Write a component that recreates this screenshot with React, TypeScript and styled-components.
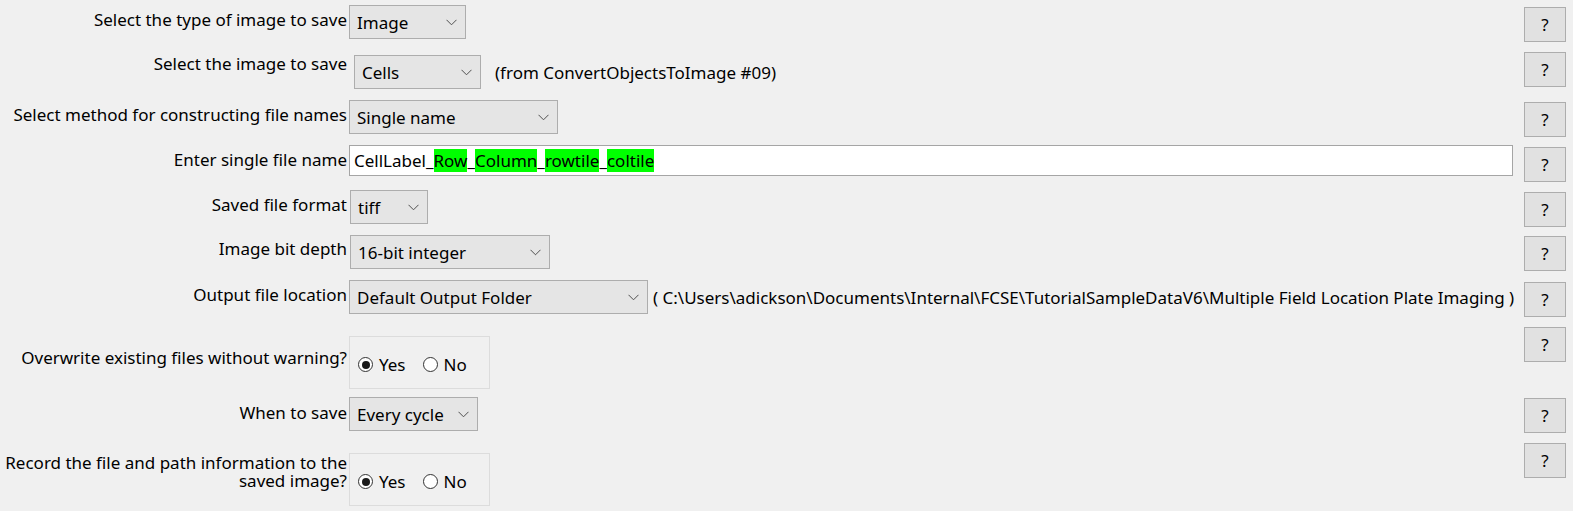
import React from "react";
import styled, { createGlobalStyle } from "styled-components";

const Global = createGlobalStyle`
  html, body { margin: 0; padding: 0; background: #f0f0f0; }
  body { font-family: "Noto Sans", "Open Sans", sans-serif; font-size: 17px; color: #000; }
`;

const Page = styled.div`
  display: flex;
  flex-direction: column;
  padding: 5px 7px 0 0;
  width: 1573px;
  box-sizing: border-box;
`;

const Row = styled.div<{ $h: number }>`
  display: grid;
  grid-template-columns: 347px 1fr 42px;
  column-gap: 2px;
  align-items: start;
  height: ${(p) => p.$h}px;
`;

const Label = styled.div<{ $pt: number }>`
  text-align: right;
  line-height: 18px;
  padding-top: ${(p) => p.$pt}px;
  white-space: pre-line;
`;

const Control = styled.div<{ $mt?: number; $ml?: number }>`
  display: flex;
  align-items: center;
  margin-top: ${(p) => p.$mt ?? 0}px;
  margin-left: ${(p) => p.$ml ?? 0}px;
  padding-right: 9px;
  min-width: 0;
`;

const SelectBox = styled.div<{ $w: number }>`
  width: ${(p) => p.$w}px;
  height: 34px;
  box-sizing: border-box;
  border: 1px solid #adadad;
  background: #e5e5e5;
  display: flex;
  align-items: center;
  justify-content: space-between;
  padding: 0 8px 0 7px;
  flex-shrink: 0;
  white-space: nowrap;
`;

const Chevron = () => (
  <svg width="11" height="7" viewBox="0 0 11 7">
    <polyline points="0.5,0.8 5.5,5.8 10.5,0.8" fill="none" stroke="#505050" strokeWidth="1" />
  </svg>
);

const Note = styled.span`
  margin-left: 14px;
  white-space: nowrap;
`;

const PathNote = styled.span`
  margin-left: 5px;
  white-space: nowrap;
`;

const TextInput = styled.div`
  flex: 1;
  height: 31px;
  box-sizing: border-box;
  border: 1px solid #a5a5a5;
  background: #fff;
  display: flex;
  align-items: center;
  padding-left: 4px;
  white-space: pre;
`;

const Hl = styled.span`
  background: #00ff00;
  display: inline-block;
  line-height: 23px;
`;

const HelpButton = styled.div<{ $mt: number }>`
  margin-top: ${(p) => p.$mt}px;
  width: 42px;
  height: 35px;
  box-sizing: border-box;
  border: 1px solid #adadad;
  background: #e1e1e1;
  display: flex;
  align-items: center;
  justify-content: center;
`;

const RadioGroup = styled.div`
  width: 141px;
  height: 53px;
  box-sizing: border-box;
  border: 1px solid #dcdcdc;
  display: flex;
  align-items: center;
  padding: 4px 0 0 8px;
  gap: 17px;
`;

const RadioItem = styled.div`
  display: flex;
  align-items: center;
  gap: 6px;
`;

const Circle = styled.span<{ $on?: boolean }>`
  width: 15px;
  height: 15px;
  box-sizing: border-box;
  border-radius: 50%;
  border: 1px solid #333;
  background: #fff;
  display: flex;
  align-items: center;
  justify-content: center;
  &::after {
    content: "";
    display: ${(p) => (p.$on ? "block" : "none")};
    width: 8px;
    height: 8px;
    border-radius: 50%;
    background: #1a1a1a;
  }
`;

const Radios = () => (
  <RadioGroup>
    <RadioItem>
      <Circle $on />
      <span>Yes</span>
    </RadioItem>
    <RadioItem>
      <Circle />
      <span>No</span>
    </RadioItem>
  </RadioGroup>
);

const Select = ({ w, v }: { w: number; v: string }) => (
  <SelectBox $w={w}>
    <span>{v}</span>
    <Chevron />
  </SelectBox>
);

export default function App() {
  return (
    <>
      <Global />
      <Page>
        <Row $h={47}>
          <Label $pt={6}>Select the type of image to save</Label>
          <Control>
            <Select w={117} v="Image" />
          </Control>
          <HelpButton $mt={2}>?</HelpButton>
        </Row>
        <Row $h={48}>
          <Label $pt={3}>Select the image to save</Label>
          <Control $mt={3} $ml={5}>
            <Select w={127} v="Cells" />
            <Note>(from ConvertObjectsToImage #09)</Note>
          </Control>
          <HelpButton $mt={0}>?</HelpButton>
        </Row>
        <Row $h={45}>
          <Label $pt={6}>Select method for constructing file names</Label>
          <Control>
            <Select w={209} v="Single name" />
          </Control>
          <HelpButton $mt={2}>?</HelpButton>
        </Row>
        <Row $h={45}>
          <Label $pt={6}>Enter single file name</Label>
          <Control>
            <TextInput>
              CellLabel_<Hl>Row</Hl>_<Hl>Column</Hl>_<Hl>rowtile</Hl>_<Hl>coltile</Hl>
            </TextInput>
          </Control>
          <HelpButton $mt={2}>?</HelpButton>
        </Row>
        <Row $h={45}>
          <Label $pt={6}>Saved file format</Label>
          <Control $ml={1}>
            <Select w={78} v="tiff" />
          </Control>
          <HelpButton $mt={2}>?</HelpButton>
        </Row>
        <Row $h={45}>
          <Label $pt={5}>Image bit depth</Label>
          <Control $ml={1}>
            <Select w={200} v="16-bit integer" />
          </Control>
          <HelpButton $mt={1}>?</HelpButton>
        </Row>
        <Row $h={47}>
          <Label $pt={6}>Output file location</Label>
          <Control>
            <Select w={299} v="Default Output Folder" />
            <PathNote>( C:\Users\adickson\Documents\Internal\FCSE\TutorialSampleDataV6\Multiple Field Location Plate Imaging )</PathNote>
          </Control>
          <HelpButton $mt={2}>?</HelpButton>
        </Row>
        <Row $h={70}>
          <Label $pt={22}>Overwrite existing files without warning?</Label>
          <Control $mt={9}>
            <Radios />
          </Control>
          <HelpButton $mt={0}>?</HelpButton>
        </Row>
        <Row $h={46}>
          <Label $pt={7}>When to save</Label>
          <Control>
            <Select w={129} v="Every cycle" />
          </Control>
          <HelpButton $mt={1}>?</HelpButton>
        </Row>
        <Row $h={68}>
          <Label $pt={11}>{"Record the file and path information to the\nsaved image?"}</Label>
          <Control $mt={10}>
            <Radios />
          </Control>
          <HelpButton $mt={0}>?</HelpButton>
        </Row>
      </Page>
    </>
  );
}
